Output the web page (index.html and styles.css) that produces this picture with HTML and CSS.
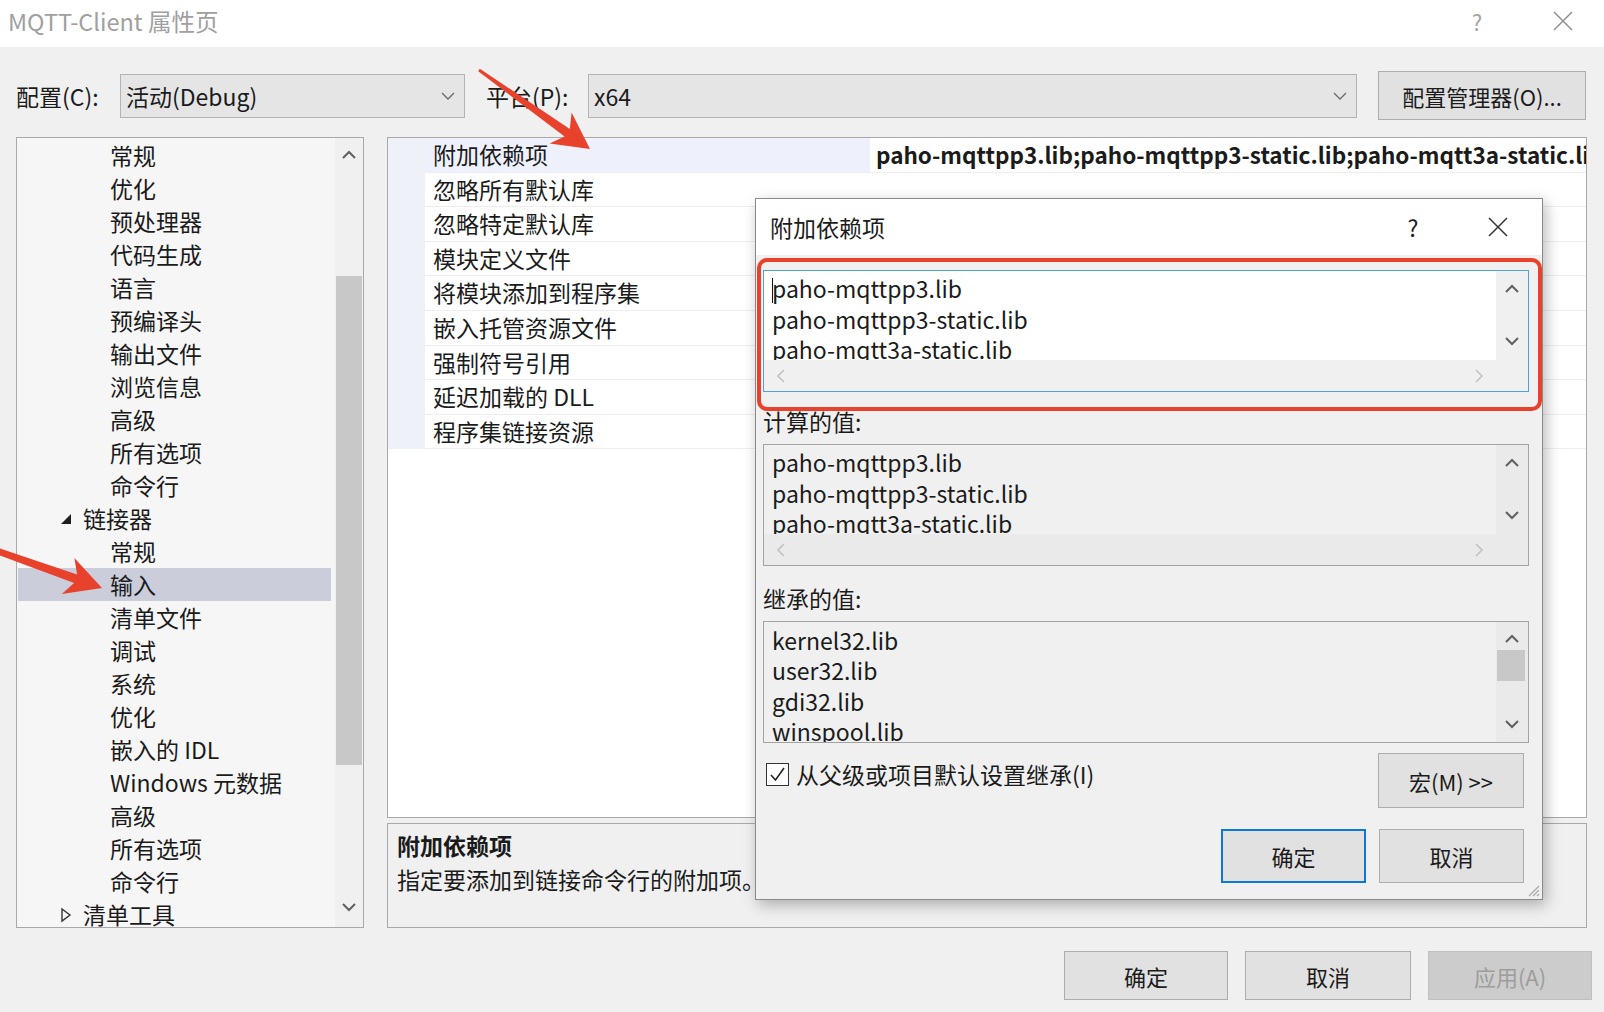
FILE: index.html
```html
<!DOCTYPE html>
<html lang="zh-CN">
<head>
    <meta charset="UTF-8">
    <title>MQTT-Client 属性页</title>
    <link rel="stylesheet" href="styles.css">
</head>
<body>

    <!-- Window title bar -->
    <div class="titlebar">
        <span class="title">MQTT-Client 属性页</span>
        <span class="tb-help">?</span>
        <svg class="tb-close" width="20" height="20" viewBox="0 0 20 20"><path d="M1 1L19 19M19 1L1 19"/></svg>
    </div>

    <div class="content">
        <!-- Configuration row -->
        <div class="config-row">
            <span class="cfg-label">配置(C):</span>
            <div class="select select-config">
                <span>活动(Debug)</span>
                <svg class="chev" width="14" height="8" viewBox="0 0 14 8"><path d="M1 1L7 7L13 1"/></svg>
            </div>
            <span class="cfg-label platform-label">平台(P):</span>
            <div class="select select-platform">
                <span>x64</span>
                <svg class="chev" width="14" height="8" viewBox="0 0 14 8"><path d="M1 1L7 7L13 1"/></svg>
            </div>
            <button class="btn btn-manager">配置管理器(O)...</button>
        </div>

        <div class="panes">
            <!-- Left tree -->
            <div class="tree">
                <ul class="tree-list">
                    <li class="tree-item">常规</li>
                    <li class="tree-item">优化</li>
                    <li class="tree-item">预处理器</li>
                    <li class="tree-item">代码生成</li>
                    <li class="tree-item">语言</li>
                    <li class="tree-item">预编译头</li>
                    <li class="tree-item">输出文件</li>
                    <li class="tree-item">浏览信息</li>
                    <li class="tree-item">高级</li>
                    <li class="tree-item">所有选项</li>
                    <li class="tree-item">命令行</li>
                    <li class="tree-item parent">
                        <svg class="twisty twisty-open" width="12" height="12" viewBox="0 0 12 12"><path d="M11 1V11H1Z"/></svg>链接器
                    </li>
                    <li class="tree-item">常规</li>
                    <li class="tree-item selected">输入</li>
                    <li class="tree-item">清单文件</li>
                    <li class="tree-item">调试</li>
                    <li class="tree-item">系统</li>
                    <li class="tree-item">优化</li>
                    <li class="tree-item">嵌入的 IDL</li>
                    <li class="tree-item">Windows 元数据</li>
                    <li class="tree-item">高级</li>
                    <li class="tree-item">所有选项</li>
                    <li class="tree-item">命令行</li>
                    <li class="tree-item parent">
                        <svg class="twisty twisty-closed" width="12" height="16" viewBox="0 0 12 16"><path d="M2 2L10 8L2 14Z"/></svg>清单工具
                    </li>
                </ul>
                <div class="vscroll">
                    <svg class="sb-arrow" width="16" height="10" viewBox="0 0 16 10"><path d="M2 8L8 2L14 8"/></svg>
                    <div class="sb-thumb tree-thumb"></div>
                    <div class="sb-space"></div>
                    <svg class="sb-arrow sb-bottom" width="16" height="10" viewBox="0 0 16 10"><path d="M2 2L8 8L14 2"/></svg>
                </div>
            </div>

            <!-- Right property grid -->
            <div class="right-pane">
                <div class="grid">
                    <div class="grid-row selected">
                        <div class="gutter"></div>
                        <div class="name">附加依赖项</div>
                        <div class="value">paho-mqttpp3.lib;paho-mqttpp3-static.lib;paho-mqtt3a-static.lib;paho-mqtt3c.lib</div>
                    </div>
                    <div class="grid-row"><div class="gutter"></div><div class="name">忽略所有默认库</div><div class="value"></div></div>
                    <div class="grid-row"><div class="gutter"></div><div class="name">忽略特定默认库</div><div class="value"></div></div>
                    <div class="grid-row"><div class="gutter"></div><div class="name">模块定义文件</div><div class="value"></div></div>
                    <div class="grid-row"><div class="gutter"></div><div class="name">将模块添加到程序集</div><div class="value"></div></div>
                    <div class="grid-row"><div class="gutter"></div><div class="name">嵌入托管资源文件</div><div class="value"></div></div>
                    <div class="grid-row"><div class="gutter"></div><div class="name">强制符号引用</div><div class="value"></div></div>
                    <div class="grid-row"><div class="gutter"></div><div class="name">延迟加载的 DLL</div><div class="value"></div></div>
                    <div class="grid-row"><div class="gutter"></div><div class="name">程序集链接资源</div><div class="value"></div></div>
                </div>
                <div class="desc">
                    <div class="desc-title">附加依赖项</div>
                    <div class="desc-text">指定要添加到链接命令行的附加项。</div>
                </div>
            </div>
        </div>

        <div class="footer">
            <button class="btn btn-foot">确定</button>
            <button class="btn btn-foot btn-cancel">取消</button>
            <button class="btn btn-foot btn-disabled">应用(A)</button>
        </div>
    </div>

    <!-- Child dialog -->
    <div class="dialog">
        <div class="dlg-title">
            <span class="dlg-caption">附加依赖项</span>
            <span class="dlg-help">?</span>
            <svg class="dlg-close" width="20" height="20" viewBox="0 0 20 20"><path d="M1 1L19 19M19 1L1 19"/></svg>
        </div>

        <div class="dlg-body">
            <div class="editbox active">
                <div class="edit-text"><span class="caret"></span>paho-mqttpp3.lib<br>paho-mqttpp3-static.lib<br>paho-mqtt3a-static.lib</div>
                <div class="vbar">
                    <svg class="sb-arrow" width="16" height="10" viewBox="0 0 16 10"><path d="M2 8L8 2L14 8"/></svg>
                    <svg class="sb-arrow" width="16" height="10" viewBox="0 0 16 10"><path d="M2 2L8 8L14 2"/></svg>
                </div>
                <div class="hbar">
                    <svg class="sb-arrow off" width="10" height="16" viewBox="0 0 10 16"><path d="M8 2L2 8L8 14"/></svg>
                    <svg class="sb-arrow off" width="10" height="16" viewBox="0 0 10 16"><path d="M2 2L8 8L2 14"/></svg>
                </div>
                <div class="corner"></div>
            </div>

            <div class="dlg-label">计算的值:</div>
            <div class="editbox readonly">
                <div class="edit-text">paho-mqttpp3.lib<br>paho-mqttpp3-static.lib<br>paho-mqtt3a-static.lib</div>
                <div class="vbar">
                    <svg class="sb-arrow" width="16" height="10" viewBox="0 0 16 10"><path d="M2 8L8 2L14 8"/></svg>
                    <svg class="sb-arrow" width="16" height="10" viewBox="0 0 16 10"><path d="M2 2L8 8L14 2"/></svg>
                </div>
                <div class="hbar">
                    <svg class="sb-arrow off" width="10" height="16" viewBox="0 0 10 16"><path d="M8 2L2 8L8 14"/></svg>
                    <svg class="sb-arrow off" width="10" height="16" viewBox="0 0 10 16"><path d="M2 2L8 8L2 14"/></svg>
                </div>
                <div class="corner"></div>
            </div>

            <div class="dlg-label second">继承的值:</div>
            <div class="editbox readonly no-hbar">
                <div class="edit-text">kernel32.lib<br>user32.lib<br>gdi32.lib<br>winspool.lib</div>
                <div class="vbar">
                    <svg class="sb-arrow" width="16" height="10" viewBox="0 0 16 10"><path d="M2 8L8 2L14 8"/></svg>
                    <div class="sb-thumb inherit-thumb"></div>
                    <div class="sb-space"></div>
                    <svg class="sb-arrow" width="16" height="10" viewBox="0 0 16 10"><path d="M2 2L8 8L14 2"/></svg>
                </div>
            </div>

            <div class="dlg-options">
                <label class="check">
                    <span class="checkbox"><svg class="tick" width="17" height="17" viewBox="0 0 17 17"><path d="M2 9L6.5 14L15 2"/></svg></span>
                    从父级或项目默认设置继承(I)
                </label>
                <button class="btn btn-macro">宏(M) &gt;&gt;</button>
            </div>

            <div class="dlg-buttons">
                <button class="btn btn-dlg btn-default">确定</button>
                <button class="btn btn-dlg">取消</button>
            </div>
        </div>

        <svg class="grip" width="14" height="14" viewBox="0 0 14 14"><path d="M13 3L3 13M13 7L7 13M13 11L11 13"/></svg>

        <!-- red annotation frame -->
        <div class="mark-box"></div>
    </div>

    <!-- red annotation arrows -->
    <svg class="arrows" width="1604" height="1012" viewBox="0 0 1604 1012">
        <polygon points="478.2,71.3 564.6,136.4 549.6,143.6 590,149 571.6,112.6 569.8,129 479.8,68.7"/>
        <polygon points="-20.9,547.8 74.1,582.9 61.8,593.9 102,588 74.4,558.1 77.1,574.5 -19,542.2"/>
    </svg>

</body>
</html>
```

FILE: styles.css
```css
* {
    box-sizing: border-box;
}

body {
    margin: 0;
    width: 1604px;
    height: 1012px;
    overflow: hidden;
    position: relative;
    background-color: #f0f0f0;
    font-family: "Noto Sans CJK SC", "Noto Sans", sans-serif;
    font-size: 23px;
    color: #1b1b1b;
}

svg path {
    fill: none;
}

/* Title bar */
.titlebar {
    height: 47px;
    background-color: #fff;
    display: flex;
    align-items: center;
    padding: 0 31px 5px 8px;
}

.title {
    flex: 1;
    font-size: 23.5px;
    color: #a0a0a0;
}

.tb-help {
    width: 40px;
    text-align: center;
    font-size: 22px;
    color: #a5a5a5;
    margin-right: 56px;
}

.tb-close path {
    stroke: #8f8f8f;
    stroke-width: 1.5;
}

/* Content */
.content {
    padding: 24px 17px 0 16px;
}

.config-row {
    display: flex;
    align-items: center;
    height: 49px;
}

.cfg-label {
    width: 104px;
    flex-shrink: 0;
}

.platform-label {
    margin-left: 21px;
    width: 102px;
}

.select {
    height: 44px;
    background-color: #e5e5e5;
    border: 1px solid #b4b4b4;
    display: flex;
    align-items: center;
    padding: 0 9px 0 5px;
    flex-shrink: 0;
}

.select span {
    flex: 1;
}

.select-config {
    width: 345px;
}

.select-platform {
    width: 769px;
}

.chev path {
    stroke: #6a6a6a;
    stroke-width: 1.3;
}

.btn {
    font-family: inherit;
    font-size: 22px;
    color: #1b1b1b;
    background-color: #e1e1e1;
    border: 1px solid #adadad;
    padding: 0;
    flex-shrink: 0;
}

.btn-manager {
    margin-left: 21px;
    width: 208px;
    height: 49px;
}

/* Panes */
.panes {
    display: flex;
    gap: 23px;
    margin-top: 17px;
    height: 791px;
}

.tree {
    width: 348px;
    flex-shrink: 0;
    border: 1px solid #a9a9a9;
    background-color: #f6f6f6;
    display: flex;
    overflow: hidden;
}

.tree-list {
    flex: 1;
    list-style: none;
    margin: 0;
    padding: 1px 4px 0 1px;
}

.tree-item {
    height: 33px;
    line-height: 33px;
    padding-left: 92px;
    white-space: nowrap;
}

.tree-item.parent {
    padding-left: 42px;
    display: flex;
    align-items: center;
}

.twisty {
    margin-right: 11px;
}

.twisty-open path {
    fill: #1e1e1e;
}

.twisty-closed path {
    stroke: #333;
    stroke-width: 1.4;
}

.tree-item.selected {
    background-color: #cbcddb;
}

.vscroll {
    width: 28px;
    flex-shrink: 0;
    background-color: #f0f0f0;
    display: flex;
    flex-direction: column;
    align-items: center;
}

.vscroll .sb-arrow {
    margin-top: 12px;
}

.vscroll .sb-bottom {
    margin: 0 0 15px;
}

.sb-arrow path {
    stroke: #606060;
    stroke-width: 2;
}

.sb-arrow.off path {
    stroke: #c2c2c2;
    stroke-width: 1.6;
}

.sb-thumb {
    background-color: #c8c8c8;
    align-self: stretch;
}

.tree-thumb {
    margin: 116px 1px 0 1px;
    height: 489px;
}

.sb-space {
    flex: 1;
}

.right-pane {
    flex: 1;
    min-width: 0;
    display: flex;
    flex-direction: column;
    gap: 5px;
}

.grid {
    height: 681px;
    border: 1px solid #a9a9a9;
    background-color: #fff;
    overflow: hidden;
}

.grid-row {
    display: flex;
    height: 34.6px;
}

.gutter {
    width: 37px;
    flex-shrink: 0;
    background-color: #eff1f9;
}

.name,
.value {
    border-bottom: 1px solid #eeeeee;
    line-height: 33px;
    white-space: nowrap;
    overflow: hidden;
}

.name {
    width: 445px;
    flex-shrink: 0;
    padding-left: 8px;
}

.value {
    flex: 1;
    min-width: 0;
    padding-left: 6px;
    font-weight: bold;
    font-size: 22.5px;
}

.grid-row.selected .name {
    background-color: #eef1fb;
}

.desc {
    flex: 1;
    border: 1px solid #a9a9a9;
    padding: 4px 9px;
}

.desc-title {
    font-weight: bold;
    line-height: 34px;
}

.desc-text {
    line-height: 34px;
}

.footer {
    display: flex;
    justify-content: flex-end;
    gap: 17px;
    margin-top: 23px;
    margin-right: -5px;
}

.btn-foot {
    width: 164px;
    height: 49px;
}

.btn-cancel {
    width: 166px;
}

.btn-disabled {
    background-color: #cccccc;
    border-color: #bfbfbf;
    color: #9d9d9d;
}

/* Dialog */
.dialog {
    position: absolute;
    left: 755px;
    top: 198px;
    width: 788px;
    height: 702px;
    background-color: #f0f0f0;
    border: 1px solid #8a8a8a;
    box-shadow: 3px 5px 14px rgba(0, 0, 0, 0.28);
}

.dlg-title {
    height: 56px;
    background-color: #fff;
    display: flex;
    align-items: center;
    padding: 0 34px 0 14px;
}

.dlg-caption {
    flex: 1;
}

.dlg-help {
    width: 40px;
    text-align: center;
    margin-right: 55px;
}

.dlg-close path {
    stroke: #333;
    stroke-width: 1.5;
}

.dlg-body {
    padding: 15px 13px 0 7px;
}

.editbox {
    height: 122px;
    border: 1px solid #a3a3a3;
    display: grid;
    grid-template-columns: 1fr 32px;
    grid-template-rows: 1fr 31px;
}

.editbox.active {
    border-color: #4ea1d9;
}

.editbox.no-hbar {
    grid-template-rows: 1fr;
}

.edit-text {
    padding: 2px 0 0 8px;
    line-height: 30.5px;
    white-space: nowrap;
    overflow: hidden;
    background-color: #fff;
}

.editbox.readonly .edit-text {
    background-color: #f0f0f0;
}

.no-hbar .edit-text {
    padding-top: 3px;
    line-height: 30.3px;
}

.caret {
    display: inline-block;
    width: 1px;
    height: 25px;
    background-color: #111;
    vertical-align: -5px;
    margin-right: -1px;
}

.vbar {
    background-color: #f0f0f0;
    display: flex;
    flex-direction: column;
    align-items: center;
    justify-content: space-between;
    padding: 13px 0 14px;
}

.editbox.readonly .vbar,
.editbox.readonly .hbar,
.editbox.readonly .corner {
    background-color: #eaeaea;
}

.no-hbar .vbar {
    padding: 12px 0 13px;
}

.inherit-thumb {
    height: 31px;
    margin: 6px 3px 0 1px;
}

.hbar {
    background-color: #f0f0f0;
    display: flex;
    align-items: center;
    justify-content: space-between;
    padding: 0 12px;
}

.corner {
    background-color: #f0f0f0;
}

.dlg-label {
    margin-top: 14px;
    margin-bottom: 8px;
    line-height: 30px;
}

.dlg-label.second {
    margin-top: 17px;
}

.dlg-options {
    display: flex;
    justify-content: space-between;
    align-items: flex-start;
    margin-top: 10px;
}

.check {
    display: flex;
    align-items: center;
    padding-top: 6px;
    line-height: 30px;
}

.checkbox {
    width: 23px;
    height: 23px;
    border: 1px solid #333;
    background-color: #fff;
    margin: 0 7px 0 3px;
    display: flex;
    align-items: center;
    justify-content: center;
}

.tick path {
    stroke: #222;
    stroke-width: 1.6;
}

.btn-macro {
    width: 146px;
    height: 55px;
    margin-right: 5px;
}

.dlg-buttons {
    display: flex;
    justify-content: flex-end;
    gap: 13px;
    margin-top: 21px;
    margin-right: 5px;
}

.btn-dlg {
    width: 145px;
    height: 54px;
}

.btn-default {
    border: 2px solid #0a78d4;
}

.grip {
    position: absolute;
    right: 2px;
    bottom: 2px;
}

.grip path {
    stroke: #a8a8a8;
    stroke-width: 1.2;
}

.mark-box {
    position: absolute;
    left: 1px;
    top: 59px;
    width: 785px;
    height: 153px;
    border: 4px solid #e8412c;
    border-radius: 10px;
}

.arrows {
    position: absolute;
    left: 0;
    top: 0;
    pointer-events: none;
}

.arrows polygon {
    fill: #e8412c;
}
```
